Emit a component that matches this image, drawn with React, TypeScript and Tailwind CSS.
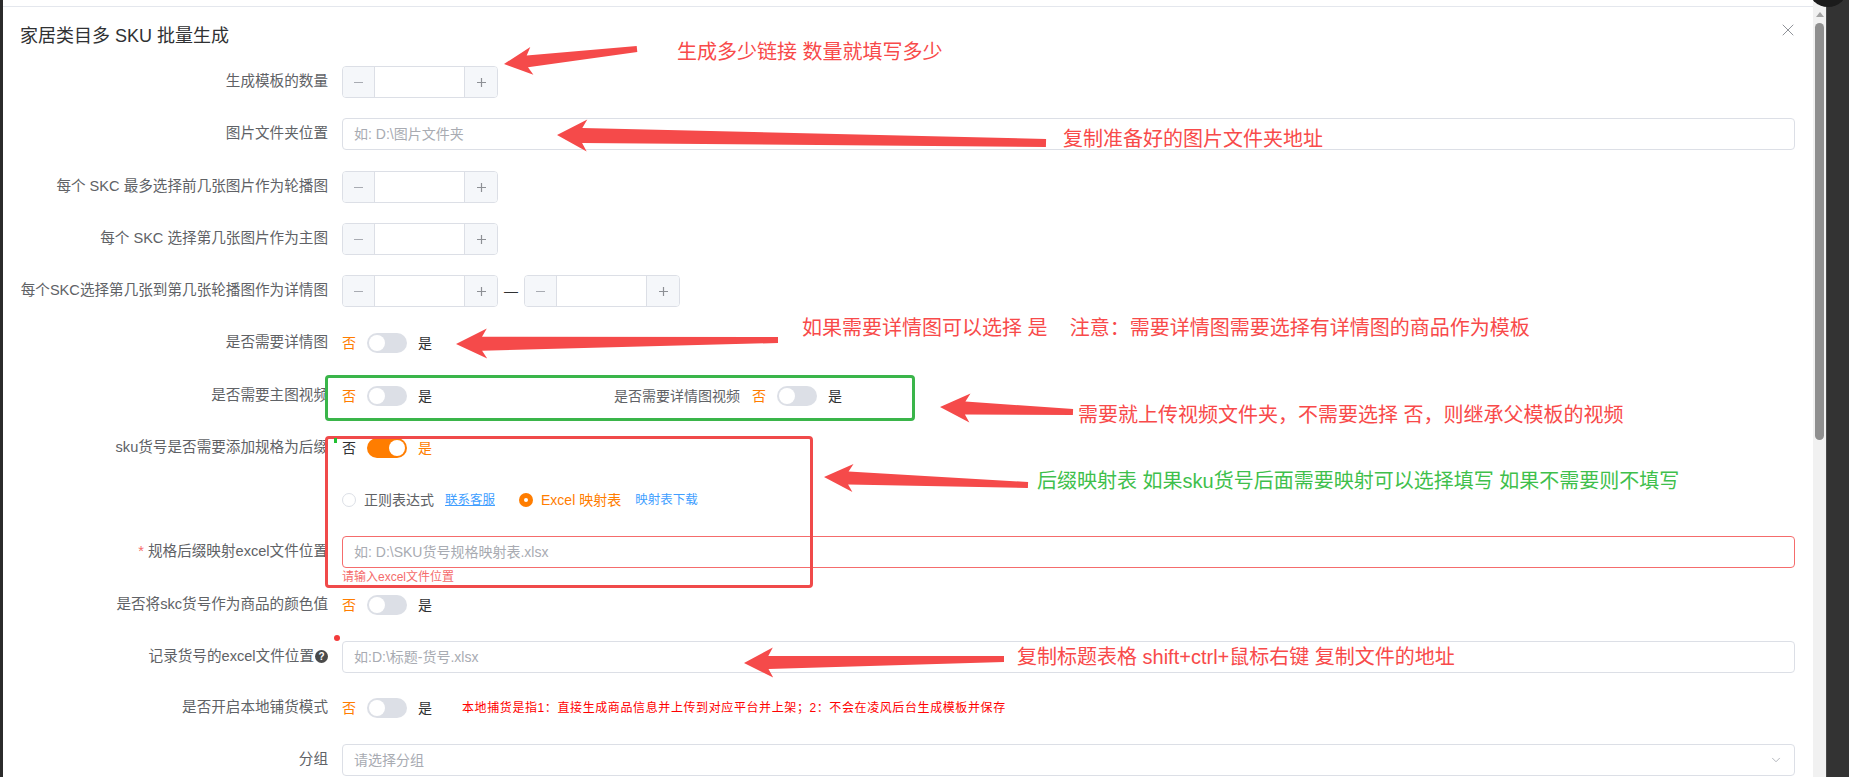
import { ChevronDown, X } from "lucide-react";
import type { ReactNode } from "react";

// annotation arrows drawn over the form: [tailX, tailY, tipX, tipY, headLen, headHalf, tailHalf, neckHalf]
const arrows: number[][] = [
  [637, 49, 504, 64, 28, 14, 3, 6],
  [1046, 143, 557, 135, 30, 16, 4, 7.5],
  [778, 340, 456, 344, 31, 15, 3, 7],
  [1073, 412, 940, 407, 30, 14.5, 3, 6.5],
  [1028, 485, 824, 477, 29, 14, 3, 6.5],
  [1004, 659, 744, 663, 29, 15, 3, 6.5],
];

const arrowPoints = ([x1, y1, x2, y2, L, H, w0, w1]: number[]) => {
  const len = Math.hypot(x2 - x1, y2 - y1);
  const ux = (x2 - x1) / len;
  const uy = (y2 - y1) / len;
  const px = -uy;
  const py = ux;
  const bx = x2 - ux * L;
  const by = y2 - uy * L;
  const jx = x2 - ux * L * 0.84;
  const jy = y2 - uy * L * 0.84;
  return [
    [x2, y2],
    [bx + px * H, by + py * H],
    [jx + px * w1, jy + py * w1],
    [x1 + px * w0, y1 + py * w0],
    [x1 - px * w0, y1 - py * w0],
    [jx - px * w1, jy - py * w1],
    [bx - px * H, by - py * H],
  ]
    .map((p) => p.map((v) => v.toFixed(1)).join(","))
    .join(" ");
};

const Row = ({ label, children, className = "mb-[20px]" }: { label?: ReactNode; children?: ReactNode; className?: string }) => (
  <div className={`flex h-[32px] items-center ${className}`}>
    <div className="w-[339px] shrink-0 whitespace-nowrap pr-[14px] text-right text-[14.6px] text-[#606266]">{label}</div>
    <div className="flex min-w-0 flex-1 items-center pr-[18px]">{children}</div>
  </div>
);

const Stepper = () => (
  <div className="flex h-[32px] w-[156px] overflow-hidden rounded-[4px] border border-[#dcdfe6]">
    <span className="flex w-[32px] items-center justify-center border-r border-[#dcdfe6] bg-[#f5f7fa]">
      <svg width="11" height="11" viewBox="0 0 11 11">
        <path d="M1 5.5h9" stroke="#a8abb2" strokeWidth="1.2" />
      </svg>
    </span>
    <span className="flex-1 bg-white" />
    <span className="flex w-[33px] items-center justify-center border-l border-[#dcdfe6] bg-[#f5f7fa]">
      <svg width="11" height="11" viewBox="0 0 11 11">
        <path d="M1 5.5h9M5.5 1v9" stroke="#8d9095" strokeWidth="1.2" />
      </svg>
    </span>
  </div>
);

const Switch = ({ on = false }: { on?: boolean }) => (
  <div className="flex items-center text-[14px]">
    <span className={on ? "text-[#303133]" : "text-[#ff7d00]"}>否</span>
    <span className={`relative mx-[11px] h-[20px] w-[40px] rounded-full ${on ? "bg-[#ff7d00]" : "bg-[#dcdfe6]"}`}>
      <span className={`absolute top-[2px] h-[16px] w-[16px] rounded-full bg-white ${on ? "left-[22px]" : "left-[2px]"}`} />
    </span>
    <span className={on ? "text-[#ff7d00]" : "text-[#303133]"}>是</span>
  </div>
);

const TextInput = ({ placeholder, error = false }: { placeholder: string; error?: boolean }) => (
  <input
    readOnly
    placeholder={placeholder}
    className={`h-[32px] w-full rounded-[4px] border bg-white px-[11px] text-[14px] outline-none placeholder:text-[#a8abb2] ${
      error ? "border-[#f56c6c]" : "border-[#dcdfe6]"
    }`}
  />
);

export default function App() {
  return (
    <div className="relative flex h-[777px] w-[1849px] overflow-hidden bg-[#333333] font-['Liberation_Sans','Noto_Sans_CJK_SC',sans-serif]">
      <div className="w-[3px] shrink-0 bg-[#2b2b2b]" />

      <main className="w-[1810px] shrink-0 bg-white">
        <div className="h-[7px] border-b border-[#e4e7ed]" />

        <header className="relative flex h-[59px] items-center px-[17px]">
          <h1 className="text-[18px] text-[#303133]">家居类目多 SKU 批量生成</h1>
          <X className="absolute right-[15px] top-[13px] text-[#909399]" size={20} strokeWidth={1.2} />
        </header>

        <form>
          <Row label="生成模板的数量">
            <Stepper />
          </Row>
          <Row label="图片文件夹位置" className="mb-[21px]">
            <TextInput placeholder={"如: D:\\图片文件夹"} />
          </Row>
          <Row label="每个 SKC 最多选择前几张图片作为轮播图">
            <Stepper />
          </Row>
          <Row label="每个 SKC 选择第几张图片作为主图">
            <Stepper />
          </Row>
          <Row label="每个SKC选择第几张到第几张轮播图作为详情图">
            <Stepper />
            <span className="mx-[6px] text-[14px] text-[#303133]">—</span>
            <Stepper />
          </Row>
          <Row label="是否需要详情图" className="mb-[21px]">
            <Switch />
          </Row>
          <Row label="是否需要主图视频">
            <Switch />
            <div className="w-[320px] whitespace-nowrap pr-[12px] text-right text-[14px] text-[#606266]">是否需要详情图视频</div>
            <Switch />
          </Row>
          <Row label="sku货号是否需要添加规格为后缀">
            <Switch on />
          </Row>
          <Row>
            <div className="flex items-center text-[14px]">
              <span className="h-[14px] w-[14px] rounded-full border border-[#dcdfe6] bg-white" />
              <span className="ml-[8px] text-[#606266]">正则表达式</span>
              <span className="ml-[11px] text-[12.5px] text-[#409eff] underline">联系客服</span>
              <span className="ml-[24px] flex h-[14px] w-[14px] items-center justify-center rounded-full bg-[#ff7d00]">
                <span className="h-[4px] w-[4px] rounded-full bg-white" />
              </span>
              <span className="ml-[8px] text-[#ff7d00]">Excel 映射表</span>
              <span className="ml-[14px] text-[12.5px] text-[#409eff]">映射表下载</span>
            </div>
          </Row>
          <Row
            className="mb-[21px]"
            label={
              <>
                <span className="mr-[4px] text-[#f56c6c]">*</span>规格后缀映射excel文件位置
              </>
            }
          >
            <div className="relative w-full">
              <TextInput placeholder={"如: D:\\SKU货号规格映射表.xlsx"} error />
              <div className="absolute left-0 top-full pt-[1px] text-[12px] leading-[16px] text-[#f56c6c]">请输入excel文件位置</div>
            </div>
          </Row>
          <Row label="是否将skc货号作为商品的颜色值">
            <Switch />
          </Row>
          <Row
            className="mb-[19px]"
            label={
              <span className="inline-flex items-center">
                记录货号的excel文件位置
                <span className="ml-[1px] flex h-[13px] w-[13px] items-center justify-center rounded-full bg-[#4a4a4a] text-[10px] font-bold leading-none text-white">
                  ?
                </span>
              </span>
            }
          >
            <TextInput placeholder={"如:D:\\标题-货号.xlsx"} />
          </Row>
          <Row label="是否开启本地铺货模式">
            <Switch />
            <span className="ml-[30px] whitespace-nowrap text-[12px] tracking-[0.6px] text-[#ff0000]">
              本地捕货是指1：直接生成商品信息并上传到对应平台并上架；2：不会在凌风后台生成模板并保存
            </span>
          </Row>
          <Row label="分组">
            <div className="flex h-[32px] w-full items-center justify-between rounded-[4px] border border-[#dcdfe6] px-[11px] text-[14px] text-[#a8abb2]">
              请选择分组
              <ChevronDown size={14} strokeWidth={1.5} className="text-[#a8abb2]" />
            </div>
          </Row>
        </form>
      </main>

      <div className="flex w-[13px] shrink-0 flex-col items-center bg-[#f1f1f1] pt-[12px]">
        <span className="h-0 w-0 border-x-[4px] border-b-[5px] border-x-transparent border-b-[#a3a3a3]" />
        <span className="mt-[6px] h-[417px] w-[9px] rounded-full bg-[#8f8f8f]" />
      </div>
      <div className="flex-1 border-l border-[#4a4a4a] bg-[#333333]" />

      {/* annotations drawn on top of the screenshot */}
      <div className="pointer-events-none absolute inset-0">
        <div className="absolute left-[1808px] top-[-33px] h-[40px] w-[40px] rounded-full bg-[#1c1c1c]" />

        <div className="absolute left-[325px] top-[375px] h-[46px] w-[590px] rounded-[4px] border-[3px] border-[#3ab54a]" />
        <div className="absolute left-[325px] top-[436px] h-[152px] w-[488px] rounded-[4px] border-[3px] border-[#f04a4a]" />
        <div className="absolute left-[334px] top-[438px] h-[5px] w-[3px] bg-[#22c032]" />
        <div className="absolute left-[334px] top-[635px] h-[6px] w-[6px] rounded-full bg-[#f33b3b]" />

        <svg className="absolute left-0 top-0" width="1849" height="777">
          {arrows.map((a, i) => (
            <polygon key={i} points={arrowPoints(a)} fill="#f54a4a" />
          ))}
        </svg>

        <div className="absolute left-[677px] top-[39px] whitespace-pre text-[20px] leading-[26px] text-[#f84a4a]">生成多少链接 数量就填写多少</div>
        <div className="absolute left-[1063px] top-[126px] whitespace-pre text-[20px] leading-[26px] text-[#f84a4a]">复制准备好的图片文件夹地址</div>
        <div className="absolute left-[802px] top-[315px] whitespace-pre text-[20px] leading-[26px] text-[#f84a4a]">
          如果需要详情图可以选择 是    注意：需要详情图需要选择有详情图的商品作为模板
        </div>
        <div className="absolute left-[1078px] top-[402px] whitespace-pre text-[20px] leading-[26px] text-[#f84a4a]">
          需要就上传视频文件夹，不需要选择 否，则继承父模板的视频
        </div>
        <div className="absolute left-[1037px] top-[468px] whitespace-pre text-[20px] leading-[26px] text-[#3fbf4c]">
          后缀映射表 如果sku货号后面需要映射可以选择填写 如果不需要则不填写
        </div>
        <div className="absolute left-[1017px] top-[644px] whitespace-pre text-[20px] leading-[26px] text-[#f84a4a]">
          复制标题表格 shift+ctrl+鼠标右键 复制文件的地址
        </div>
      </div>
    </div>
  );
}
